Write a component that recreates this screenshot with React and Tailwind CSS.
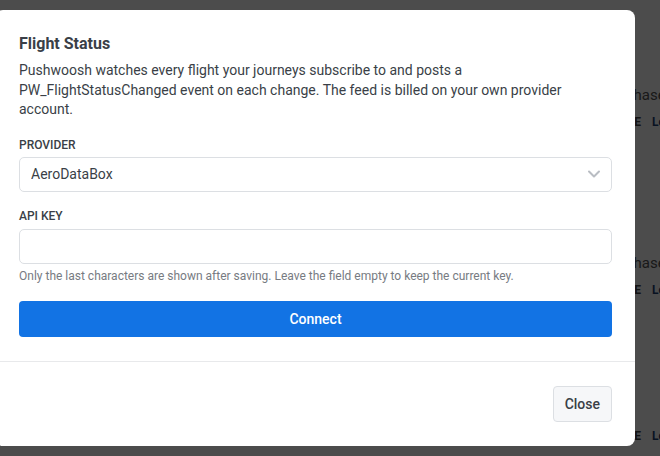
import React, { useState } from "react";

const Row = ({ title }) => {
  return (
    <div>
      {title && (
        <div className="pl-[603px] text-[15px] leading-[18px] whitespace-nowrap">
          {title}
        </div>
      )}
      <div
        className={
          title
            ? "mt-[10px] flex text-[12px] font-bold leading-[16px] whitespace-nowrap"
            : "flex text-[12px] font-bold leading-[16px] whitespace-nowrap"
        }
      >
        <span className="shrink-0 w-[641px] text-right text-[#444]">DELETE</span>
        <span className="shrink-0 ml-[11px] text-[#1d3f73]">Logs</span>
      </div>
    </div>
  );
};

const Background = () => {
  return (
    <div className="w-[660px] h-[456px] overflow-hidden bg-white text-[#555]">
      <div className="pt-[86px]">
        <Row title="Purchase" />
      </div>
      <div className="pt-[124px]">
        <Row title="Purchase" />
      </div>
      <div className="pt-[130px]">
        <Row />
      </div>
    </div>
  );
};

export default function App() {
  const [provider, setProvider] = useState("AeroDataBox");
  const [apiKey, setApiKey] = useState("");

  return (
    <div
      className="relative w-[660px] h-[456px] overflow-hidden"
      style={{ fontFamily: "Roboto, 'Liberation Sans', sans-serif" }}
    >
      <Background />
      <div className="absolute inset-0 bg-black/70"></div>

      <div className="absolute left-[-5px] top-[10px] w-[640px] bg-white rounded-lg">
        <div className="pl-6 pr-[23px] pt-6 pb-6">
          <h2 className="text-[16px] leading-[20px] font-bold text-[#3a3f47]">
            Flight Status
          </h2>
          <p className="mt-[7px] text-[14px] leading-[19.5px] text-[#3a3f47]">
            Pushwoosh watches every flight your journeys subscribe to and posts a
            PW_FlightStatusChanged event on each change. The feed is billed on
            your own provider account.
          </p>

          <div className="mt-[17px]">
            <label className="block text-[12px] leading-[16px] font-medium text-[#3a3f47]">
              PROVIDER
            </label>
            <div className="relative mt-[4px]">
              <select
                value={provider}
                onChange={(e) => setProvider(e.target.value)}
                className="appearance-none w-full h-[35px] pl-[11px] pr-8 border border-[#dcdfe3] rounded-[5px] bg-white text-[14px] text-[#3a3f47] outline-none"
              >
                <option>AeroDataBox</option>
                <option>FlightAware</option>
              </select>
              <svg
                className="absolute right-[11px] top-[12px] w-[14px] h-[10px] pointer-events-none"
                viewBox="0 0 14 10"
                fill="none"
                stroke="#b9bdc3"
                strokeWidth="2"
                strokeLinecap="round"
                strokeLinejoin="round"
              >
                <path d="M2 2.5 L7 7.5 L12 2.5" />
              </svg>
            </div>
          </div>

          <div className="mt-[16px]">
            <label className="block text-[12px] leading-[16px] font-medium text-[#3a3f47]">
              API KEY
            </label>
            <input
              type="text"
              value={apiKey}
              onChange={(e) => setApiKey(e.target.value)}
              className="mt-[5px] block w-full h-[35px] px-[11px] border border-[#dcdfe3] rounded-[5px] bg-white text-[14px] text-[#3a3f47] outline-none"
            />
            <p className="mt-[4px] text-[12px] leading-[16px] text-[#777b82]">
              Only the last characters are shown after saving. Leave the field
              empty to keep the current key.
            </p>
          </div>

          <button
            type="button"
            className="mt-[17px] w-full h-[36px] pt-[1px] rounded-[4px] bg-[#1273e4] text-white text-[14px] font-medium"
          >
            Connect
          </button>
        </div>

        <div className="border-t border-[#e8e9eb] pl-6 pr-[23px] pt-6 pb-6 flex justify-end">
          <button
            type="button"
            className="h-[36px] px-[11px] pt-[1px] rounded-[4px] border border-[#dcdfe3] bg-[#f6f7f9] text-[14px] font-medium text-[#3a3f47]"
          >
            Close
          </button>
        </div>
      </div>
    </div>
  );
}
